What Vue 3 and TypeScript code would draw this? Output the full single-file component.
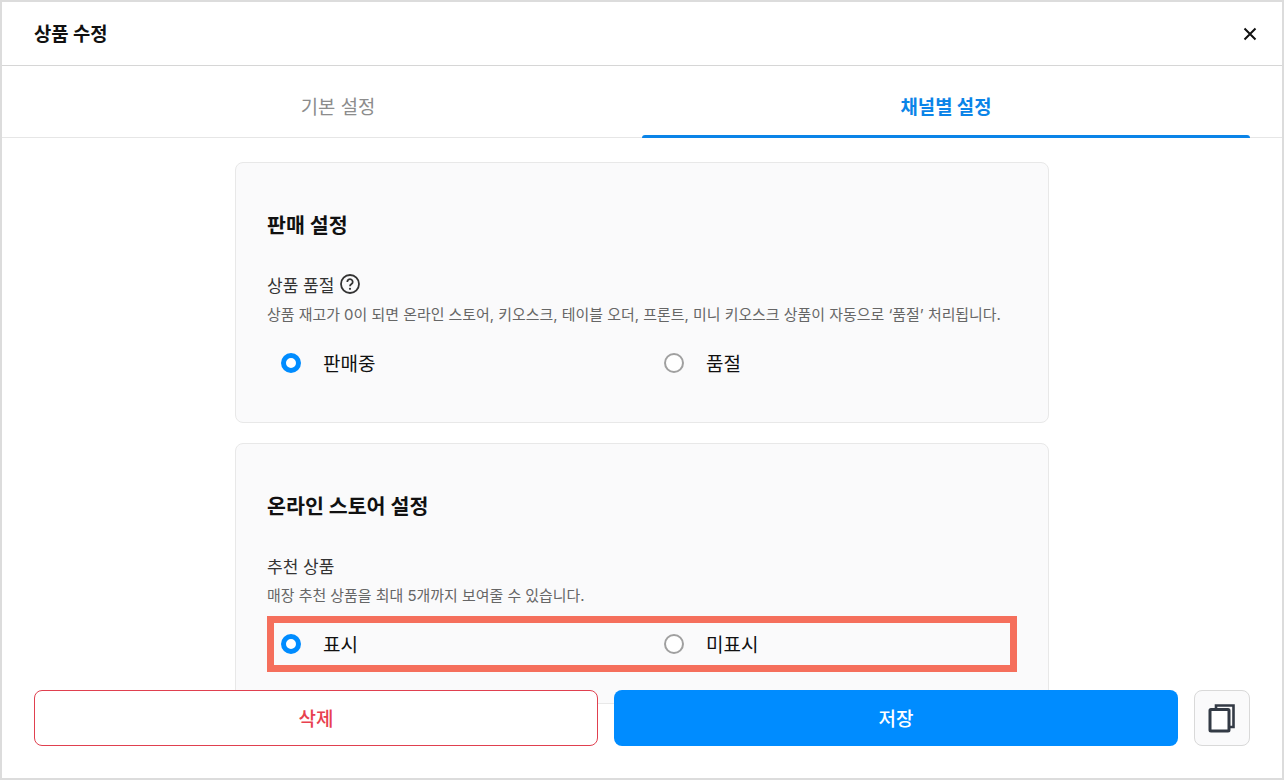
<script setup lang="ts">
import { ref } from "vue"

interface Section {
	title: string
	label: string
	help: boolean
	description: string
	options: string[]
	highlight: boolean
}

const tabs = ["기본 설정", "채널별 설정"]
const activeTab = ref(1)

const sections: Section[] = [
	{
		title: "판매 설정",
		label: "상품 품절",
		help: true,
		description: "상품 재고가 0이 되면 온라인 스토어, 키오스크, 테이블 오더, 프론트, 미니 키오스크 상품이 자동으로 ‘품절’ 처리됩니다.",
		options: ["판매중", "품절"],
		highlight: false,
	},
	{
		title: "온라인 스토어 설정",
		label: "추천 상품",
		help: false,
		description: "매장 추천 상품을 최대 5개까지 보여줄 수 있습니다.",
		options: ["표시", "미표시"],
		highlight: true,
	},
]
</script>

<template>
	<div class="modal">
		<header class="modal__header">
			<h1>상품 수정</h1>
			<svg class="modal__close" width="14" height="14" viewBox="0 0 14 14" aria-label="닫기">
				<path d="M1.5 1.5l11 11M12.5 1.5l-11 11" stroke="#111" stroke-width="2" fill="none" />
			</svg>
		</header>

		<nav class="tabs">
			<div
				v-for="(tab, index) in tabs"
				:key="tab"
				class="tabs__item"
				:class="{ 'tabs__item--active': index === activeTab }"
			>
				{{ tab }}
			</div>
		</nav>

		<main class="modal__body">
			<section
				v-for="section in sections"
				:key="section.title"
				class="card"
			>
				<h2>{{ section.title }}</h2>
				<div class="card__label">
					{{ section.label }}
					<svg v-if="section.help" width="20" height="20" viewBox="0 0 20 20">
						<circle cx="10" cy="10" r="9" stroke="#333" stroke-width="1.8" fill="none" />
						<path d="M7.3 7.9a2.7 2.7 0 1 1 4.2 2.2c-.9.6-1.5 1.1-1.5 2.2" stroke="#333" stroke-width="1.8" fill="none" />
						<circle cx="10" cy="14.8" r="1.1" fill="#333" />
					</svg>
				</div>
				<p>{{ section.description }}</p>
				<div class="radios">
					<label v-for="(option, index) in section.options" :key="option" class="radio">
						<span class="radio__mark" :class="{ 'radio__mark--on': index === 0 }"></span>
						<span class="radio__text">{{ option }}</span>
					</label>
					<div v-if="section.highlight" class="radios__marker"></div>
				</div>
			</section>
		</main>

		<footer class="actions">
			<button class="actions__delete">삭제</button>
			<button class="actions__save">저장</button>
			<button class="actions__copy" aria-label="복사">
				<svg width="28" height="30" viewBox="0 0 28 30">
					<path d="M8 5V2.5h17.5V24H22" stroke="#333a45" stroke-width="2.6" fill="none" />
					<rect x="2" y="6.5" width="19" height="21.5" rx="1" stroke="#333a45" stroke-width="3" fill="#fff" />
				</svg>
			</button>
		</footer>
	</div>
</template>

<style>
html, body {
	background: #fff;
	overflow: hidden;
}
</style>

<style scoped>
.modal {
	position: relative;
	display: flex;
	flex-direction: column;
	width: 1284px;
	height: 780px;
	box-sizing: border-box;
	border: 2px solid #dcdcdc;
	background: #fff;
	overflow: hidden;
	font-family: Inter, "Noto Sans CJK KR", sans-serif;
	color: #111;
}

.modal__header {
	display: flex;
	align-items: center;
	justify-content: space-between;
	flex: none;
	height: 63px;
	padding: 0 25px 0 32px;
	border-bottom: 1px solid #d6d6d6;
}

.modal__header h1 {
	margin: 0 0 2px;
	font-size: 18.8px;
	font-weight: 700;
}

.tabs {
	display: flex;
	flex: none;
	height: 71px;
	padding: 0 32px;
	border-bottom: 1px solid #e6e6e6;
}

.tabs__item {
	position: relative;
	flex: 1;
	height: 72px;
	box-sizing: border-box;
	padding-top: 28px;
	text-align: center;
	font-size: 18.8px;
	line-height: 27px;
	color: #8c8c8c;
}

.tabs__item--active {
	color: #0a84e8;
	font-weight: 700;
}

.tabs__item--active::after {
	content: "";
	position: absolute;
	left: 0;
	right: 0;
	bottom: 0;
	height: 3px;
	border-radius: 3px 3px 0 0;
	background: #0a84e8;
}

.modal__body {
	display: flex;
	flex-direction: column;
	align-items: center;
	gap: 20px;
	flex: 1;
	min-height: 0;
	padding-top: 24px;
}

.card {
	flex: none;
	box-sizing: border-box;
	width: 814px;
	height: 261px;
	padding: 48px 31px 0;
	border: 1px solid #e8e8e8;
	border-radius: 8px;
	background: #fafafb;
}

.card h2 {
	margin: 0 0 31px;
	font-size: 20.6px;
	line-height: 30px;
	font-weight: 700;
}

.card__label {
	display: flex;
	align-items: center;
	gap: 6px;
	height: 24px;
	font-size: 17px;
	color: #333;
}

.card p {
	margin: 9px 0 0;
	font-size: 14.94px;
	line-height: 21px;
	color: #666;
}

.radios {
	position: relative;
	display: grid;
	grid-template-columns: 383px 383px;
	margin-top: 22px;
	padding-left: 14px;
}

.radio {
	display: flex;
	align-items: center;
	gap: 22px;
	height: 30px;
	font-size: 19px;
	color: #111;
}

.radio__text {
	padding-bottom: 2px;
}

.radio__mark {
	box-sizing: border-box;
	width: 20px;
	height: 20px;
	border: 2px solid #a0a0a0;
	border-radius: 50%;
	background: #fff;
}

.radio__mark--on {
	border: 5px solid #008cff;
}

.radios__marker {
	position: absolute;
	left: 0;
	top: -13px;
	width: 750px;
	height: 56px;
	box-sizing: border-box;
	border: 7px solid #f56f5c;
	pointer-events: none;
}

.actions {
	position: absolute;
	left: 32px;
	right: 32px;
	bottom: 32px;
	display: flex;
	gap: 16px;
}

.actions button {
	height: 56px;
	padding: 0 0 2px;
	border-radius: 8px;
	font-family: inherit;
	font-size: 19px;
	font-weight: 500;
}

.actions__delete {
	width: 564px;
	border: 1px solid #e0404f;
	background: #fff;
	color: #e8404f;
}

.actions__save {
	width: 564px;
	border: 0;
	background: #008cff;
	color: #fff;
}

.actions .actions__copy {
	display: flex;
	align-items: center;
	justify-content: center;
	width: 56px;
	padding: 0;
	border: 1px solid #d9d9d9;
	background: #fafafb;
}
</style>
